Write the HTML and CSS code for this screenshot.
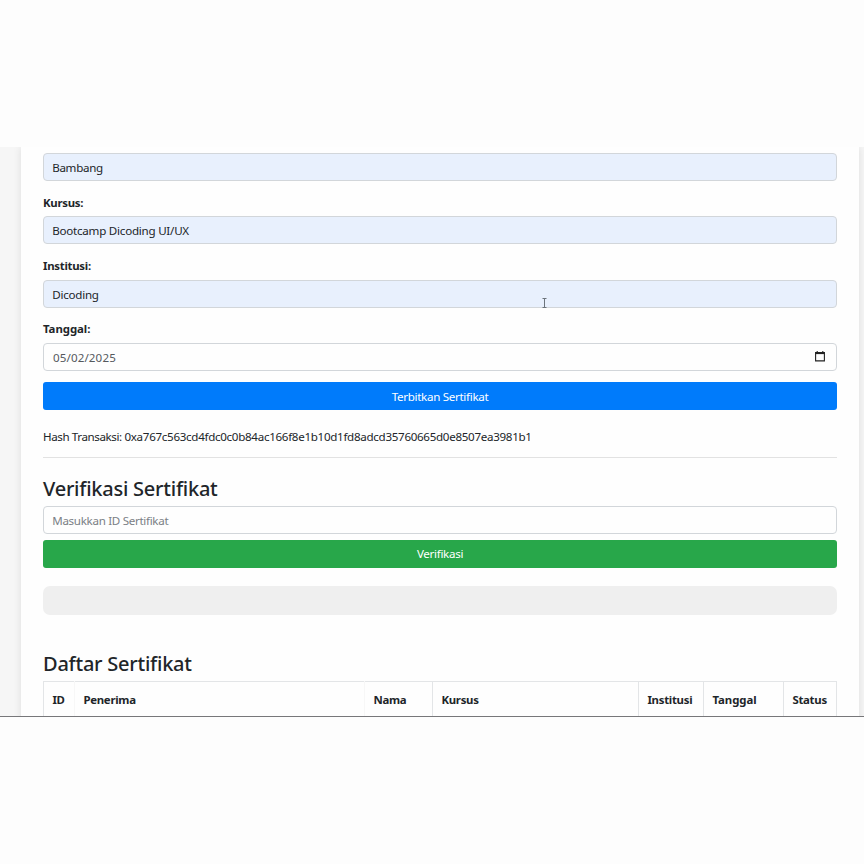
FILE: index.html
```html
<!DOCTYPE html>
<html lang="id">
<head>
<meta charset="utf-8">
<title>Sertifikat</title>
<link rel="stylesheet" href="styles.css">
</head>
<body>
<div class="viewport">
  <main class="card">
    <form class="issue">
      <div class="control filled"><span>Bambang</span></div>
      <label>Kursus:</label>
      <div class="control filled"><span class="t-course">Bootcamp Dicoding UI/UX</span></div>
      <label>Institusi:</label>
      <div class="control filled"><span class="t-course">Dicoding</span></div>
      <label class="l-tanggal">Tanggal:</label>
      <div class="control date"><span class="t-date">05/02/2025</span>
        <svg class="calendar" viewBox="0 0 10 11"><path d="M2.2 0v2M7.8 0v2M.6 1.6h8.8v8.3H.6z" fill="none" stroke="#222" stroke-width="1.1"/><path d="M.3 1h9.4v2.1H.3z" fill="#222"/></svg>
      </div>
      <button type="button" class="btn primary"><span>Terbitkan Sertifikat</span></button>
    </form>
    <p class="hash">Hash Transaksi: <span class="digest">0xa767c563cd4fdc0c0b84ac166f8e1b10d1fd8adcd35760665d0e8507ea3981b1</span></p>
    <h2>Verifikasi Sertifikat</h2>
    <div class="control placeholder"><span>Masukkan ID Sertifikat</span></div>
    <button type="button" class="btn success"><span>Verifikasi</span></button>
    <div class="result"></div>
    <h2>Daftar Sertifikat</h2>
    <table>
      <colgroup><col class="c-id"><col class="c-to"><col class="c-name"><col class="c-course"><col class="c-inst"><col class="c-date"><col class="c-status"></colgroup>
      <thead><tr><th class="soft">ID</th><th class="soft">Penerima</th><th>Nama</th><th>Kursus</th><th>Institusi</th><th class="l-tanggal">Tanggal</th><th>Status</th></tr></thead>
    </table>
  </main>
  <svg class="cursor" viewBox="0 0 5 10"><path d="M.5.5h4M.5 9.5h4M2.5.5v9" fill="none" stroke="#6c747c"/></svg>
</div>
</body>
</html>
```
FILE: styles.css
```css
* { box-sizing: border-box; }
body {
  margin: 0;
  padding-top: 147px;
  height: 864px;
  background: #fdfdfd;
  color: #212529;
  font: 11.6px/17px "Noto Sans", "Open Sans", sans-serif;
  letter-spacing: -.31px;
  overflow: hidden;
}
.viewport {
  position: relative;
  height: 570px;
  padding: 0 5px 0 21px;
  overflow: hidden;
  background: #f6f6f6;
  border-bottom: 1px solid #77777a;
}
.card {
  height: 640px;
  padding: 6px 22px 0;
  background: #fefefe;
  box-shadow: 0 0 8px rgba(0, 0, 0, .1);
}
span { white-space: nowrap; }
.issue { display: flex; flex-direction: column; }
.control {
  display: flex;
  align-items: center;
  height: 28px;
  padding: 1px 8.2px 0;
  border: 1px solid #d2d6da;
  border-radius: 4px;
  background: #fefefe;
}
.filled { background: #e8f0fd; }
.t-course { letter-spacing: -.24px; }
.date { justify-content: space-between; padding: 1px 11px 0 9px; color: #55595d; }
.t-date { letter-spacing: .12px; }
.calendar { width: 10px; height: 11px; margin-top: -1px; }
.placeholder { color: #7b8085; }
label { height: 35.3px; padding-top: 12.7px; }
label, th { font-size: 11.4px; font-weight: 700; letter-spacing: -.27px; }
.l-tanggal { letter-spacing: -.04px; }
.btn {
  display: block;
  width: 100%;
  height: 28px;
  padding: 1px 0 0;
  border: 0;
  border-radius: 3px;
  color: #fff;
  font: inherit;
  letter-spacing: inherit;
}
.primary { margin-top: 11.5px; background: #007bfb; }
.success { margin-top: 6px; padding: 0; background: #28a74a; }
.hash {
  height: 47.5px;
  margin: 0 0 17px;
  padding-top: 18px;
  border-bottom: 1px solid #e2e2e2;
  letter-spacing: -.4px;
}
.digest { letter-spacing: -.3px; }
h2 {
  height: 31px;
  margin: 0;
  font-size: 20px;
  font-weight: 500;
  line-height: 28px;
  letter-spacing: -.24px;
}
.result { height: 29px; margin: 18px 0 35px; border-radius: 7px; background: #efefef; }
table { width: 793px; table-layout: fixed; border-collapse: collapse; }
th {
  height: 37px;
  padding: 0 0 0 8.4px;
  border: 1px solid #e3e5e7;
  text-align: left;
  white-space: nowrap;
}
.soft { border-right-color: #f7f7f7; }
.c-id { width: 31px; }
.c-to { width: 290px; }
.c-name { width: 68px; }
.c-course { width: 206px; }
.c-inst { width: 65px; }
.c-date { width: 80px; }
.c-status { width: 53px; }
.cursor { position: absolute; left: 542px; top: 151px; width: 5px; height: 10px; }
```
